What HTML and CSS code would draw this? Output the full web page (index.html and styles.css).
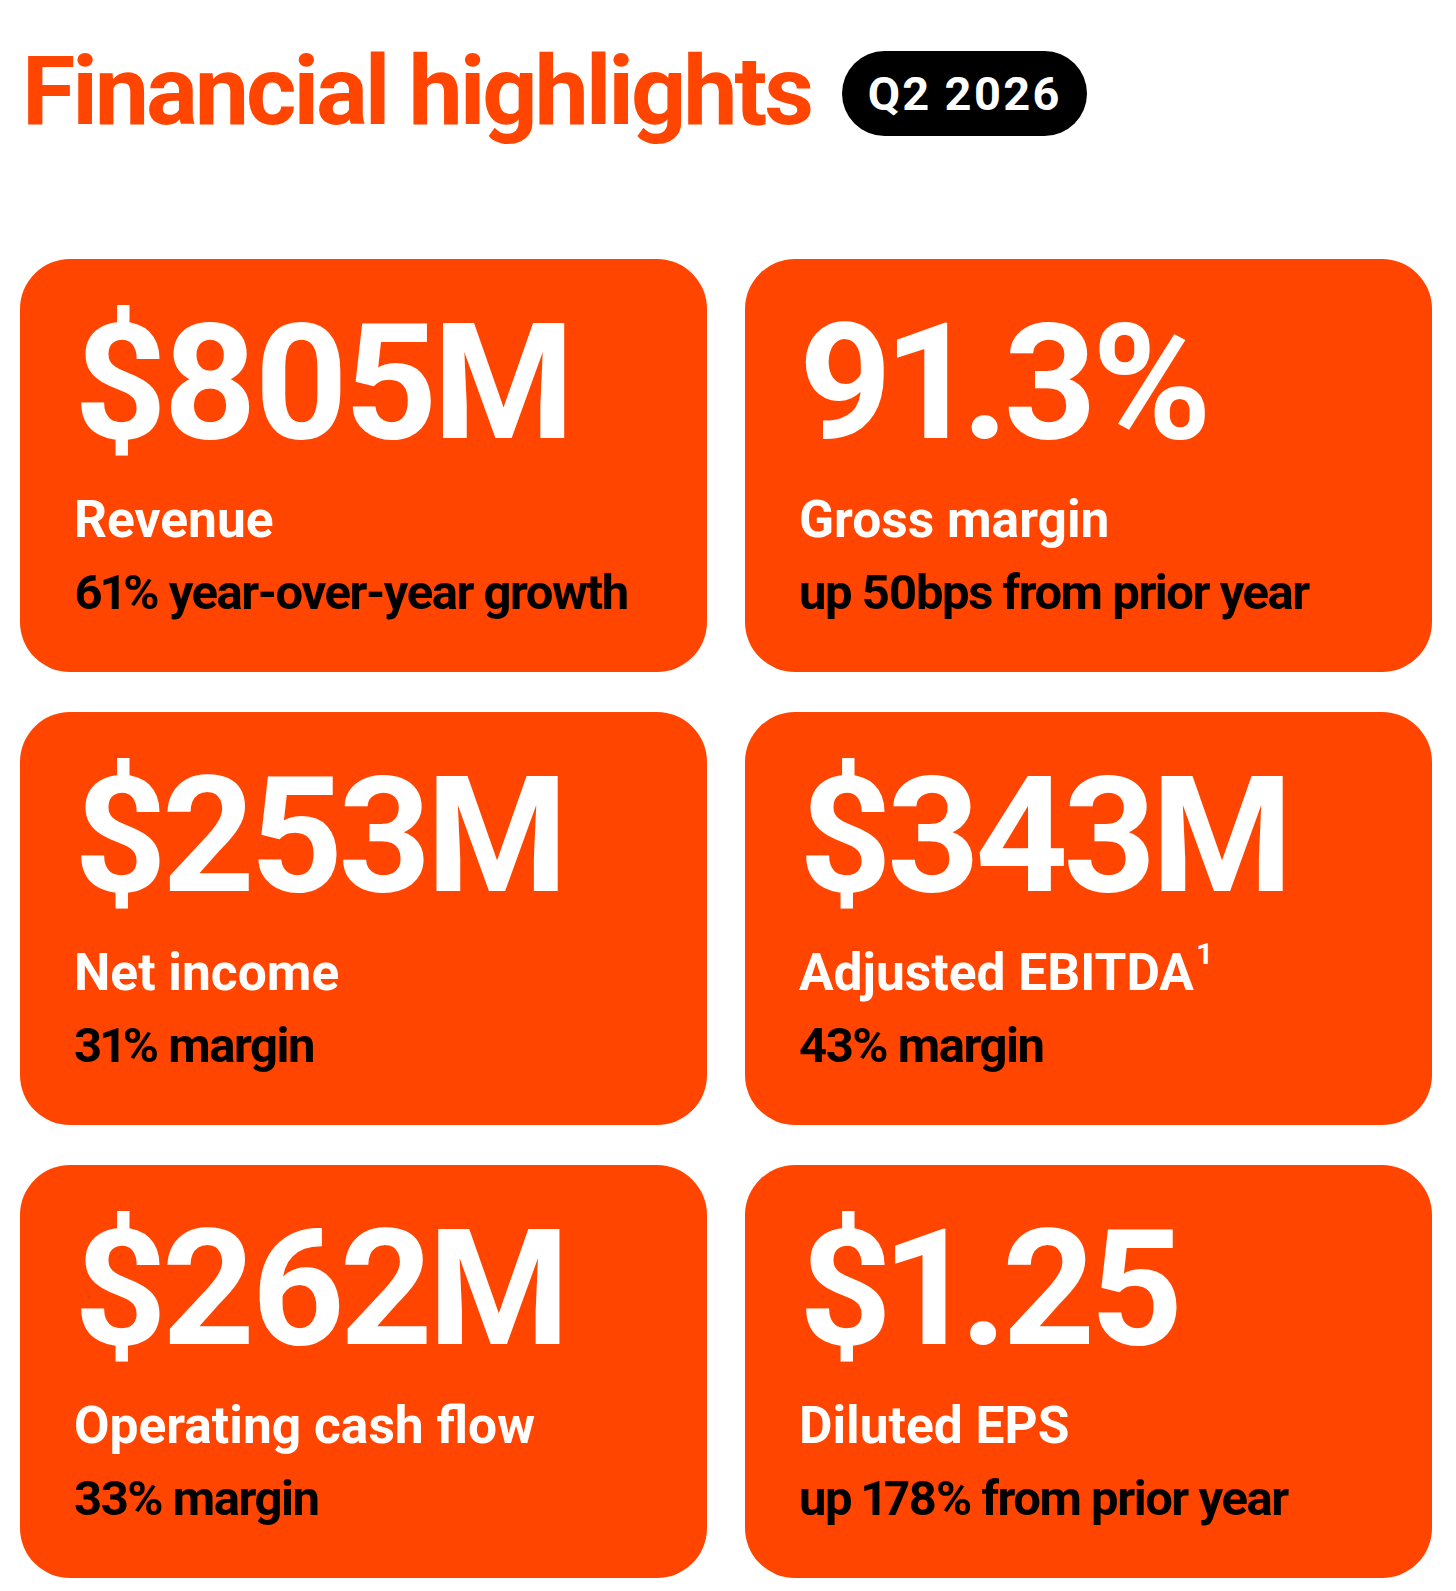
FILE: index.html
```html
<!DOCTYPE html>
<html lang="en">
<head>
<meta charset="utf-8">
<title>Financial highlights Q2 2026</title>
<link rel="stylesheet" href="styles.css">
</head>
<body>
<main class="page">
  <header class="header">
    <h1 class="title">Financial highlights</h1>
    <span class="badge">Q2 2026</span>
  </header>
  <section class="grid">
    <article class="card">
      <div class="value">$805M</div>
      <div class="label">Revenue</div>
      <div class="note">61% year-over-year growth</div>
    </article>
    <article class="card">
      <div class="value">91.3%</div>
      <div class="label">Gross margin</div>
      <div class="note">up 50bps from prior year</div>
    </article>
    <article class="card">
      <div class="value">$253M</div>
      <div class="label">Net income</div>
      <div class="note">31% margin</div>
    </article>
    <article class="card">
      <div class="value">$343M</div>
      <div class="label">Adjusted EBITDA<sup class="sup">1</sup></div>
      <div class="note">43% margin</div>
    </article>
    <article class="card">
      <div class="value">$262M</div>
      <div class="label">Operating cash flow</div>
      <div class="note">33% margin</div>
    </article>
    <article class="card">
      <div class="value">$1.25</div>
      <div class="label">Diluted EPS</div>
      <div class="note">up 178% from prior year</div>
    </article>
  </section>
</main>
</body>
</html>
```
FILE: styles.css
```css
html, body {
  margin: 0;
  padding: 0;
  background: #ffffff;
}

body {
  font-family: Roboto, "Liberation Sans", Arial, sans-serif;
  font-weight: 700;
  font-variant-numeric: proportional-nums;
}

.page {
  width: 1456px;
  min-height: 1591px;
}

.header {
  display: flex;
  align-items: flex-start;
  padding: 36px 0 0 22px;
  gap: 31px;
}

.title {
  margin: 0;
  font-size: 97px;
  line-height: 110px;
  font-weight: 700;
  letter-spacing: -0.032em;
  color: #ff4500;
}

.badge {
  margin-top: 15px;
  height: 85px;
  box-sizing: border-box;
  padding: 0 26px;
  border-radius: 43px;
  background: #000000;
  color: #ffffff;
  font-size: 47px;
  line-height: 85px;
  letter-spacing: 0.04em;
  white-space: nowrap;
}

.grid {
  display: grid;
  grid-template-columns: 687px 687px;
  grid-auto-rows: 413px;
  column-gap: 38px;
  row-gap: 40px;
  margin-top: 113px;
  padding-left: 20px;
}

.card {
  background: #ff4500;
  border-radius: 50px;
  padding: 43px 0 0 54px;
  box-sizing: border-box;
}

.value {
  font-size: 162px;
  line-height: 162px;
  letter-spacing: -0.03em;
  color: #ffffff;
  white-space: nowrap;
}

.label {
  margin-top: 26px;
  font-size: 51.5px;
  line-height: 60px;
  color: #ffffff;
  white-space: nowrap;
}

.note {
  margin-top: 13px;
  font-size: 49px;
  line-height: 60px;
  letter-spacing: -0.03em;
  color: #000000;
  white-space: nowrap;
}

.sup {
  font-size: 30px;
  line-height: 0;
  vertical-align: 26px;
  margin-left: 3px;
}
```
